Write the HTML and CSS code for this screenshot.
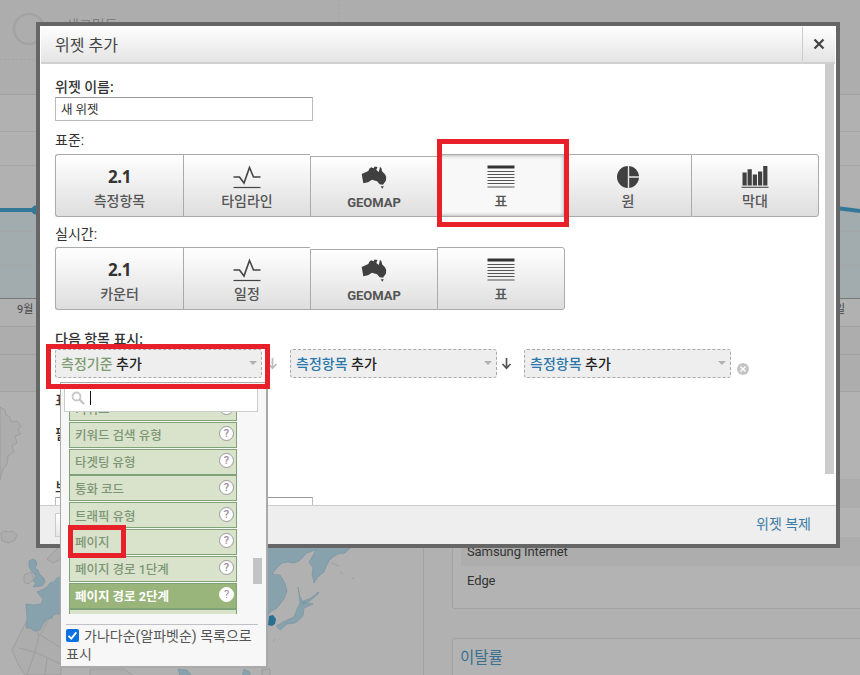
FILE: index.html
```html
<!DOCTYPE html>
<html lang="ko">

<head>
    <meta charset="UTF-8">
    <meta name="viewport" content="width=device-width, initial-scale=1.0">
    <title>위젯 추가</title>
    <link rel="stylesheet" href="styles.css">
</head>

<body>

    <!-- shared icons -->
    <svg class="defs" width="0" height="0">
        <symbol id="i-line" viewBox="0 0 28 24">
            <path d="M0.500 12h6l4.500 6 5.500-15.500 4 9.500h7" fill="none" stroke="#444" stroke-width="1.600" />
            <path d="M0.500 22.500h27" stroke="#444" stroke-width="1.200" />
        </symbol>
        <symbol id="i-geo" viewBox="0 0 28 24">
            <path d="M1.700 9l6.600-3 1.200-2.400 1.700-1.300 2.400 1 1-1.700 2.900 0.500-1.200 3 2.500 1.800 1.200-5.200 1.400 1.600 0.800 3.200 2.600 2.600 1.400 2.600-0.300 4-3 4-3.200-0.500-2.600-3-1.800-0.500-3.300-1-4 2.600-4.700 1z" fill="#404040" />
            <path d="M20.700 21.300h3.200l-1.600 2.400z" fill="#404040" />
        </symbol>
        <symbol id="i-table" viewBox="0 0 28 24">
            <path d="M0.500 0.500h27v3h-27z" fill="#333" />
            <path d="M0.500 6.500h27M0.500 9.500h27M0.500 12.500h27M0.500 15.500h27M0.500 18.500h27M0.500 22h27" stroke="#555" stroke-width="1" />
        </symbol>
        <symbol id="i-pie" viewBox="0 0 28 24">
            <circle cx="14" cy="12" r="11" fill="#404040" />
            <path d="M14.500 1v22M14.500 12h11" stroke="#e6e6e6" stroke-width="1.400" />
        </symbol>
        <symbol id="i-bar" viewBox="0 0 28 24">
            <path d="M1.500 7.500h4.200v13h-4.200zM6.600 4.300h4.200v16.200h-4.200zM11.800 9.500h4.200v11h-4.200zM17 6.500h4.200v14h-4.200zM22.200 1h4.200v19.500h-4.200z" fill="#404040" />
            <path d="M0.500 22.300h27" stroke="#555" stroke-width="1.200" />
        </symbol>
        <symbol id="i-down" viewBox="0 0 10 13">
            <path d="M5 1v10M1 7l4 4.200L9 7" fill="none" stroke="currentColor" stroke-width="1.700" />
        </symbol>
    </svg>

    <!-- dashboard behind the dialog -->
    <div class="dash">
        <div class="dash-head">
            <svg width="860" height="94" viewBox="0 0 860 94">
                <circle cx="29" cy="29" r="15" fill="none" stroke="#a3a3a3" stroke-width="2.500" />
                <path d="M0 59.500h40M338.500 0v26" stroke="#a5a5a5" stroke-dasharray="2 2" />
            </svg>
            <span class="segment">세그먼트</span>
        </div>
        <div class="chart">
            <svg width="860" height="231" viewBox="0 95 860 231">
                <path d="M0 210h40v88H0zM836 208l24 3v87h-24z" fill="#a2abae" />
                <path d="M0 131.500h860M0 165.500h860M0 231.500h860M0 265.500h860" stroke="#a6a6a6" />
                <path d="M0 210h40M836 208l24 3" stroke="#337899" stroke-width="4" fill="none" />
                <circle cx="36" cy="210" r="4.500" fill="#337899" />
                <path d="M0 298.500h860" stroke="#777" />
                <text class="axis" x="17" y="313">9월</text>
                <text class="axis" x="835" y="313">일</text>
            </svg>
        </div>
        <div class="strip"></div>
        <div class="strip tall"></div>
        <div class="dash-bottom">
            <div class="map">
                <svg width="424" height="284" viewBox="0 391 424 284">
                    <g fill="#adadad" stroke="#989898" stroke-width="0.700">
                        <path d="M0 406l5 3 1 5 4 2 1 5 6-1 4 5-3 4 3 4-6 2 2 7-5 3 2 6-6 4-1 8-4 5-3 11z" />
                        <path d="M1 532l4-2 3 1 5-1 4 4-2 5-6 3-7-2z" />
                        <path d="M24 574l7-3 3 7-6 5-4-2zM47 558l10-10 4-12v22l-8 4z" />
                        <path d="M26 621l12-5 23-3v61H25l-7-11-6-14 7-14z" />
                        <path d="M19 647l16 4 26 12M31 619l8 16-4 16M39 633l22 14M49 617l-8 16M35 651l-8 23M47 657l-2 17" fill="none" />
                        <path d="M90 668h34l10 7H90zM262 668h8v7h-8z" />
                    </g>
                    <g fill="#87a1ad" stroke="#7693a1" stroke-width="0.600">
                        <path d="M29 560l4-2 3 2 1 3-2 4 3 2 2 5 4 3 1 4-3 4-9 1 3-4-3-2 3-5-4-4-3-5zM26 603l8 1 7-1 2-5-6-7 7-3 4-3 2-3 4-1 3-4 4-1v38l-4-2-4 2-1 3-5 1-4 5-3 6-6 1-4-3-4 0 1-9z" />
                        <path d="M262 544h93l-6 4-4 4-7 1-5 3-4 4-3 6-2 5-6 5-4 6-2-9 1-6-4-6 7-12-9 3-8 8-5 2-6-1-6 1-7 7-3 4 8 1 5 8 2 8-3 8-7 9-7 4-7 11-8 3z" />
                        <path d="M298 586l2 10 3 5 5 1 5 1-9 4-1 8-3 3-5 4-8 1-7 6-4-4 9-5 9-4 3-8 3-6zM301 601l10-4 7-6 1 1-9 8-8 3z" />
                        <path d="M178 668l9 1 5 6h-12zM244 668l6 3v4h-8z" />
                    </g>
                    <path d="M340 571l3 2M352 577l2 1M273 641l2-3M331 562l8 3M268 626l2-2" stroke="#98a1a5" />
                    <path d="M269 615l4-1 3 4-1 5-3 2-4-1z" fill="#286f91" />
                </svg>
            </div>
            <div class="cards">
                <div class="card browsers">
                    <div class="row odd"></div>
                    <div class="row"></div>
                    <div class="row odd">Samsung Internet</div>
                    <div class="row">Edge</div>
                </div>
                <div class="card bounce">
                    <h3>이탈률</h3>
                </div>
            </div>
        </div>
    </div>

    <!-- add widget dialog -->
    <div class="dialog">
        <div class="dialog-head">
            <span>위젯 추가</span>
            <div class="close">
                <svg width="12" height="12" viewBox="0 0 12 12">
                    <path d="M1.500 1.500l9 9M10.500 1.500l-9 9" stroke="#444" stroke-width="2.200" />
                </svg>
            </div>
        </div>
        <div class="dialog-body">
            <div class="form">
                <label class="strong">위젯 이름:</label>
                <div class="text-input">새 위젯</div>

                <label class="std">표준:</label>
                <div class="types">
                    <div class="type"><b>2.1</b><span>측정항목</span></div>
                    <div class="type"><svg><use href="#i-line" /></svg><span>타임라인</span></div>
                    <div class="type geo"><svg><use href="#i-geo" /></svg><span>GEOMAP</span></div>
                    <div class="type selected"><svg><use href="#i-table" /></svg><span>표</span></div>
                    <div class="type"><svg><use href="#i-pie" /></svg><span>원</span></div>
                    <div class="type"><svg><use href="#i-bar" /></svg><span>막대</span></div>
                </div>

                <label class="live">실시간:</label>
                <div class="types">
                    <div class="type"><b>2.1</b><span>카운터</span></div>
                    <div class="type"><svg><use href="#i-line" /></svg><span>일정</span></div>
                    <div class="type geo"><svg><use href="#i-geo" /></svg><span>GEOMAP</span></div>
                    <div class="type"><svg><use href="#i-table" /></svg><span>표</span></div>
                </div>

                <label class="show">다음 항목 표시:</label>
                <div class="pickers">
                    <div class="picker dim"><span><em>측정기준</em> 추가</span><i></i></div>
                    <svg class="arrow light"><use href="#i-down" /></svg>
                    <div class="picker"><span><em>측정항목</em> 추가</span><i></i></div>
                    <svg class="arrow"><use href="#i-down" /></svg>
                    <div class="picker"><span><em>측정항목</em> 추가</span><i></i></div>
                    <svg class="remove" viewBox="0 0 12 12">
                        <circle cx="6" cy="6" r="6" fill="#c4c4c4" />
                        <path d="M3.500 3.500l5 5M8.500 3.500l-5 5" stroke="#fff" stroke-width="1.400" />
                    </svg>
                </div>

                <label class="rows">표</label>
                <label class="filter">필</label>
                <label class="link">보</label>
                <div class="text-input"></div>
            </div>
            <div class="scrollbar"></div>
        </div>
        <div class="dialog-foot">
            <div class="save"></div>
            <a>위젯 복제</a>
        </div>
    </div>

    <!-- dimension menu -->
    <div class="menu">
        <div class="search">
            <svg width="14" height="14" viewBox="0 0 14 14">
                <circle cx="5.500" cy="5.500" r="4" fill="none" stroke="#c6c6c6" stroke-width="1.800" />
                <path d="M8.500 8.500l4.500 4.500" stroke="#c6c6c6" stroke-width="2.400" />
            </svg>
            <div class="caret"></div>
        </div>
        <div class="list">
            <div class="item"><span>키워드</span><i>?</i></div>
            <div class="item"><span>키워드 검색 유형</span><i>?</i></div>
            <div class="item"><span>타겟팅 유형</span><i>?</i></div>
            <div class="item"><span>통화 코드</span><i>?</i></div>
            <div class="item"><span>트래픽 유형</span><i>?</i></div>
            <div class="item"><span>페이지</span><i>?</i></div>
            <div class="item"><span>페이지 경로 1단계</span><i>?</i></div>
            <div class="item active"><span>페이지 경로 2단계</span><i>?</i></div>
            <div class="item"><span></span><i></i></div>
        </div>
        <div class="thumb"></div>
        <div class="sort">
            <svg width="13" height="13" viewBox="0 0 13 13">
                <rect width="13" height="13" rx="2" fill="#0b70e0" />
                <path d="M2.500 6.800l2.800 2.800 5-6.300" fill="none" stroke="#fff" stroke-width="1.900" />
            </svg>가나다순(알파벳순) 목록으로 표시
        </div>
    </div>

    <div class="mark mark-type"></div>
    <div class="mark mark-picker"></div>
    <div class="mark mark-item"></div>

</body>

</html>
```
FILE: styles.css
```css
* {
    box-sizing: border-box;
}

body {
    margin: 0;
    width: 860px;
    height: 675px;
    overflow: hidden;
    position: relative;
    background: #b1b1b1;
    font-family: Roboto, "Noto Sans CJK KR", sans-serif;
    font-size: 14px;
    color: #333;
}

svg {
    display: block;
    flex: none;
}

.defs {
    position: absolute;
}

/* dashboard */
.dash {
    height: 675px;
    overflow: hidden;
}

.dash-head {
    position: relative;
    height: 95px;
    background: #adadad;
    border-bottom: 1px solid #a0a0a0;
}

.segment {
    position: absolute;
    left: 66px;
    top: 14px;
    line-height: 22px;
    color: #808080;
}

.chart {
    height: 231px;
}

.axis {
    font-size: 11px;
    fill: #444;
}

.strip {
    height: 28px;
    border-top: 1px solid #a2a2a2;
    background: #adadad;
}

.strip.tall {
    height: 37px;
}

.dash-bottom {
    display: flex;
    height: 284px;
    border-top: 1px solid #a2a2a2;
}

.map {
    width: 424px;
    border-right: 1px solid #a3a3a3;
    flex: none;
}

.cards {
    flex: 1;
    padding-left: 28px;
}

.card {
    width: 420px;
    padding: 0 8px;
    border: 1px solid #a2a2a2;
    border-radius: 3px;
    background: #b3b3b3;
}

.browsers {
    height: 217px;
    padding-top: 87px;
    border-top: 0;
}

.row {
    height: 29px;
    padding-left: 6px;
    line-height: 29px;
    font-size: 13px;
    letter-spacing: -0.1px;
}

.row.odd {
    background: #adadad;
}

.bounce {
    height: 60px;
    margin-top: 29px;
    padding-left: 7px;
}

.bounce h3 {
    margin: 0;
    height: 37px;
    line-height: 39px;
    font-size: 15.5px;
    font-weight: normal;
    color: #3a6f92;
    border-bottom: 1px solid #9c9c9c;
}

/* dialog */
.dialog {
    position: absolute;
    left: 36px;
    top: 22px;
    width: 804px;
    height: 526px;
    border: 4px solid #666;
    background: #fff;
    display: flex;
    flex-direction: column;
}

.dialog-head {
    display: flex;
    justify-content: space-between;
    align-items: center;
    height: 38px;
    margin: 0 1px;
    padding-left: 14px;
    font-size: 16px;
    color: #444;
    background: linear-gradient(#fff, #e4e4e4);
    border-bottom: 2px solid #d0d0d0;
}

.close {
    display: flex;
    align-items: center;
    justify-content: center;
    width: 33px;
    height: 34px;
    border-left: 1px solid #ccc;
}

.dialog-body {
    display: flex;
    height: 441px;
    overflow: hidden;
}

.form {
    width: 785px;
    padding: 14px 0 0 15px;
}

.form label {
    display: block;
    height: 18px;
    line-height: 18px;
    color: #333;
    white-space: nowrap;
}

.form .strong,
.form .show,
.form .rows,
.form .filter,
.form .link {
    font-weight: 500;
}

.text-input {
    width: 258px;
    height: 24px;
    margin-top: 1px;
    padding-left: 5px;
    line-height: 23px;
    font-size: 12.5px;
    border: 1px solid #bbb;
    border-top-color: #999;
}

.form .std {
    margin: 10px 0 5px;
}

.form .live {
    margin: 8px 0 4px;
}

.types {
    display: flex;
    align-items: flex-end;
}

.type {
    display: flex;
    flex-direction: column;
    align-items: center;
    width: 127px;
    height: 63px;
    padding-top: 10px;
    border: 1px solid #aaa;
    border-right: 0;
    background: linear-gradient(#fff, #dedede);
}

.type:first-child {
    width: 128px;
    border-radius: 3px 0 0 3px;
}

.type:last-child {
    width: 128px;
    border-right: 1px solid #aaa;
    border-radius: 0 3px 3px 0;
}

.type.geo {
    height: 61px;
    padding-top: 8px;
}

.type.selected {
    background: #f8f8f8;
    box-shadow: inset 0 0 4px #999;
}

.type b {
    height: 24px;
    line-height: 23px;
    font-family: "Open Sans", sans-serif;
    font-size: 17px;
    letter-spacing: -0.5px;
    color: #333;
}

.type svg {
    width: 28px;
    height: 24px;
}

.type span {
    margin-top: 2px;
    line-height: 20px;
    font-weight: 500;
    color: #555;
}

.type.geo span {
    margin-top: 4px;
    font-size: 13px;
    font-weight: bold;
}

.form .show {
    margin: 20px 0 1px;
}

.pickers {
    display: flex;
    align-items: center;
}

.picker {
    display: flex;
    align-items: center;
    justify-content: space-between;
    width: 207px;
    height: 29px;
    padding: 0 4px 1px 5px;
    border: 1px dashed #aaa;
    border-radius: 3px;
    background: #eee;
    font-weight: 500;
    color: #222;
}

.picker em {
    font-style: normal;
    color: #2a77ab;
}

.picker.dim em {
    color: #7c9b70;
}

.picker i {
    border: 4px solid transparent;
    border-top-color: #b0b0b0;
    border-bottom: 0;
}

.arrow {
    width: 11px;
    height: 13px;
    margin: 0 12px 0 4px;
    color: #555;
}

.arrow.light {
    margin-left: 5px;
    color: #bbb;
}

.remove {
    width: 12px;
    height: 12px;
    margin: 11px 0 0 6px;
}

.form .rows {
    margin-top: 13px;
}

.form .filter {
    margin-top: 16px;
}

.form .link {
    margin-top: 35px;
}

.scrollbar {
    width: 9px;
    height: 410px;
    background: #ccc;
}

.dialog-foot {
    display: flex;
    align-items: center;
    justify-content: space-between;
    height: 39px;
    padding: 0 25px 0 15px;
    background: #eee;
    border-top: 1px solid #ccc;
}

.dialog-foot a {
    margin-bottom: 4px;
    color: #3a7ca5;
}

.save {
    width: 60px;
    height: 24px;
    border: 1px solid #ccc;
    background: linear-gradient(#fff, #e6e6e6);
}

/* dimension menu */
.menu {
    position: absolute;
    left: 60px;
    top: 382px;
    width: 208px;
    height: 286px;
    padding: 3px 8px 0 5px;
    border: 1px solid #aaa;
    border-width: 1px 2px 2px 1px;
    background: #f7f7f7;
}

.search {
    display: flex;
    align-items: center;
    gap: 5px;
    width: 194px;
    height: 26px;
    padding: 0 0 2px 6px;
    background: #fff;
    border: 1px solid #ccc;
    margin-left: -2px;
}

.caret {
    width: 1px;
    height: 14px;
    background: #111;
}

.list {
    display: flex;
    flex-direction: column;
    justify-content: flex-start;
    width: 168px;
    height: 202px;
    margin-left: 3px;
    overflow: hidden;
}

.item {
    display: flex;
    flex: none;
    align-items: center;
    justify-content: space-between;
    height: 26px;
    margin-bottom: 0.8px;
    padding: 0 2px 0 5px;
    border: 1px solid #7fa276;
    background: #d9e2cb;
    font-size: 12.500px;
    font-weight: 500;
    color: #7c9674;
}

.item:first-child {
    margin-top: -17px;
}

.item i {
    width: 15px;
    height: 15px;
    margin-bottom: 2px;
    border: 1.500px solid #999;
    border-radius: 50%;
    background: #fff;
    font-size: 11px;
    line-height: 13px;
    font-style: normal;
    text-align: center;
    color: #998aa0;
}

.item.active {
    background: #9ab57b;
    color: #fff;
    font-weight: bold;
}

.item.active i {
    border-color: #fff;
    font-weight: normal;
}

.thumb {
    position: absolute;
    left: 192px;
    top: 175px;
    width: 9px;
    height: 26px;
    background: #c4c4c4;
}

.sort {
    margin-top: 10px;
    width: 192px;
    padding-top: 2px;
    border-top: 1px solid #c0c0c8;
    line-height: 18px;
    color: #555;
}

.sort svg {
    display: inline-block;
    vertical-align: -1px;
    margin-right: 5px;
}

/* red highlight boxes */
.mark {
    position: absolute;
    border: 5px solid #e8202a;
}

.mark-type {
    left: 437px;
    top: 139px;
    width: 132px;
    height: 88px;
}

.mark-picker {
    left: 46px;
    top: 344px;
    width: 224px;
    height: 45px;
}

.mark-item {
    left: 68px;
    top: 525px;
    width: 58px;
    height: 33px;
}
```
